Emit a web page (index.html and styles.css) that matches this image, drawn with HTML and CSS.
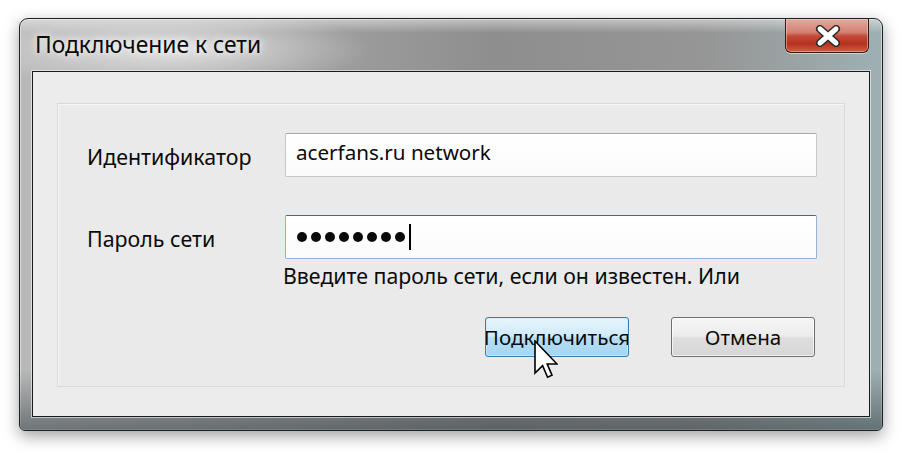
FILE: index.html
```html
<!DOCTYPE html>
<html lang="ru">
<head>
<meta charset="utf-8">
<title>Подключение к сети</title>
<link rel="stylesheet" href="styles.css">
</head>
<body>
<div class="page">
  <div class="window">
    <div class="titlebar">
      <div class="title">Подключение к сети</div>
      <div class="close">
        <svg width="26" height="22" viewBox="0 0 26 22">
          <path d="M5 4 L21 18 M21 4 L5 18" stroke="#2a2a2a" stroke-width="8" stroke-linecap="round"/>
          <path d="M5 4 L21 18 M21 4 L5 18" stroke="#ffffff" stroke-width="5" stroke-linecap="round"/>
        </svg>
      </div>
    </div>
    <div class="client">
      <div class="panel">
        <div class="form">
          <div class="label">Идентификатор</div>
          <div class="input">acerfans.ru network</div>
          <div class="label">Пароль сети</div>
          <div class="input focus">
            <span class="dot"></span><span class="dot"></span><span class="dot"></span><span class="dot"></span><span class="dot"></span><span class="dot"></span><span class="dot"></span><span class="dot"></span><span class="caret"></span>
          </div>
          <div class="hint">Введите пароль сети, если он известен. Или</div>
        </div>
        <div class="buttons">
          <div class="btn primary">
            <span class="btn-text">Подключиться</span>
            <svg class="pointer" width="24" height="40" viewBox="0 0 12 20">
              <path d="M0.5 0.5 L0.5 16.5 L4.3 12.8 L6.8 18.6 L9 17.6 L6.6 12 L11.5 12 Z" fill="#ffffff" stroke="#000000" stroke-width="0.8" stroke-linejoin="miter"/>
            </svg>
          </div>
          <div class="btn"><span class="btn-text">Отмена</span></div>
        </div>
      </div>
    </div>
  </div>
</div>
</body>
</html>
```
FILE: styles.css
```css
* { box-sizing: border-box; }
html, body { margin: 0; padding: 0; background: #ffffff; }
body { font-family: "Noto Sans", "Open Sans", sans-serif; color: #000; }

.page {
  width: 912px;
  height: 460px;
  padding: 18px 0 0 19px;
}

.window {
  width: 864px;
  height: 413px;
  border: 1px solid #1d2226;
  border-radius: 9px 9px 6px 6px;
  background:
    radial-gradient(ellipse 200px 40px at 150px 30px, rgba(235,235,235,0.85), rgba(235,235,235,0) 100%),
    linear-gradient(to bottom, rgba(255,255,255,0.45) 0, rgba(255,255,255,0) 14px),
    linear-gradient(to right, #b9b9b9 0, #a7a7a7 25%, #8e8e8e 55%, #969696 80%, #9eb0b3 100%);
  box-shadow: inset 0 0 0 1px rgba(255,255,255,0.45), 0 5px 16px rgba(0,0,0,0.38);
  display: flex;
  flex-direction: column;
  padding: 0 12px 13px 12px;
  overflow: hidden;
  position: relative;
}

.window::after {
  content: "";
  position: absolute;
  left: 0; right: 0; bottom: 0;
  height: 60px;
  background: linear-gradient(to bottom, rgba(60,75,80,0) 0, rgba(50,62,66,0.55) 100%);
  pointer-events: none;
}

.titlebar {
  height: 52px;
  display: flex;
  align-items: flex-start;
  justify-content: space-between;
  margin: 0 1px 0 3px;
}

.title {
  font-size: 22.8px;
  line-height: 26px;
  padding-top: 13px;
  color: #0a0a0a;
  text-shadow: 0 0 6px rgba(255,255,255,0.9), 0 0 12px rgba(255,255,255,0.6);
}

.close {
  width: 84px;
  height: 34px;
  border: 1px solid #3b1a12;
  border-top: none;
  border-radius: 0 0 6px 6px;
  background: linear-gradient(to bottom, #e2aaa0 0, #d48272 40%, #c24a36 52%, #b5321f 75%, #cf5e44 100%);
  box-shadow: inset 0 0 0 1px rgba(255,220,210,0.45), 0 1px 0 rgba(255,255,255,0.5);
  display: flex;
  align-items: center;
  justify-content: center;
  padding-left: 2px;
}

.client {
  flex: 1;
  border: 1px solid #1b1b1b;
  background: #ececec;
  box-shadow: 0 0 0 1px rgba(255,255,255,0.55);
  padding: 31px 24px 29px 24px;
  position: relative;
  z-index: 1;
}

.panel {
  height: 100%;
  border: 1px solid #dadada;
  background: #eaeaea;
  box-shadow: inset 1px 1px 0 #f6f6f6;
  padding: 29px 29px 0 29px;
}

.form {
  display: grid;
  grid-template-columns: 198px 532px;
  row-gap: 38px;
}

.label {
  font-size: 21.4px;
  line-height: 24px;
  padding-top: 12px;
  color: #0a0a0a;
}

.input {
  height: 44px;
  border: 1px solid #c6c6c6;
  border-top-color: #a9a9a9;
  border-radius: 2px;
  background: linear-gradient(to bottom, #ffffff, #fbfbfb);
  font-size: 20.6px;
  line-height: 24px;
  padding: 6px 10px 0 10px;
  color: #0a0a0a;
}

.input.focus {
  border-color: #8fb4d6;
  border-top-color: #3d6a93;
  display: flex;
  align-items: center;
  padding: 0 0 0 11px;
  gap: 4px;
}

.dot {
  width: 10px;
  height: 10px;
  border-radius: 50%;
  background: #0a0a0a;
}

.caret {
  width: 2px;
  height: 26px;
  background: #000;
}

.hint {
  grid-column: 2;
  margin-top: -33px;
  font-size: 21.3px;
  line-height: 24px;
  color: #0a0a0a;
  margin-left: -2px;
}

.buttons {
  display: flex;
  justify-content: flex-end;
  gap: 42px;
  margin-top: 20px;
}

.btn {
  width: 144px;
  height: 40px;
  border: 1px solid #6f6f6f;
  border-radius: 3px;
  background: linear-gradient(to bottom, #f6f6f6 0, #ececec 48%, #dedede 52%, #d6d6d6 100%);
  box-shadow: inset 0 0 0 1px rgba(255,255,255,0.7);
  display: flex;
  align-items: center;
  justify-content: center;
  overflow: hidden;
  position: relative;
  font-size: 20.6px;
  line-height: 24px;
  color: #0a0a0a;
}

.btn.primary {
  border-color: #3b7cad;
  background: linear-gradient(to bottom, #e8f5fd 0, #cfeaf9 48%, #b5def5 52%, #a6d6f1 100%);
  box-shadow: inset 0 0 0 1px rgba(200,235,255,0.8);
  overflow: visible;
}

.btn-text {
  white-space: nowrap;
  flex: none;
}

.btn.primary .btn-text {
  display: flex;
  justify-content: center;
  width: 142px;
  overflow: hidden;
}

.pointer {
  position: absolute;
  left: 48px;
  top: 22px;
  z-index: 2;
}
```
